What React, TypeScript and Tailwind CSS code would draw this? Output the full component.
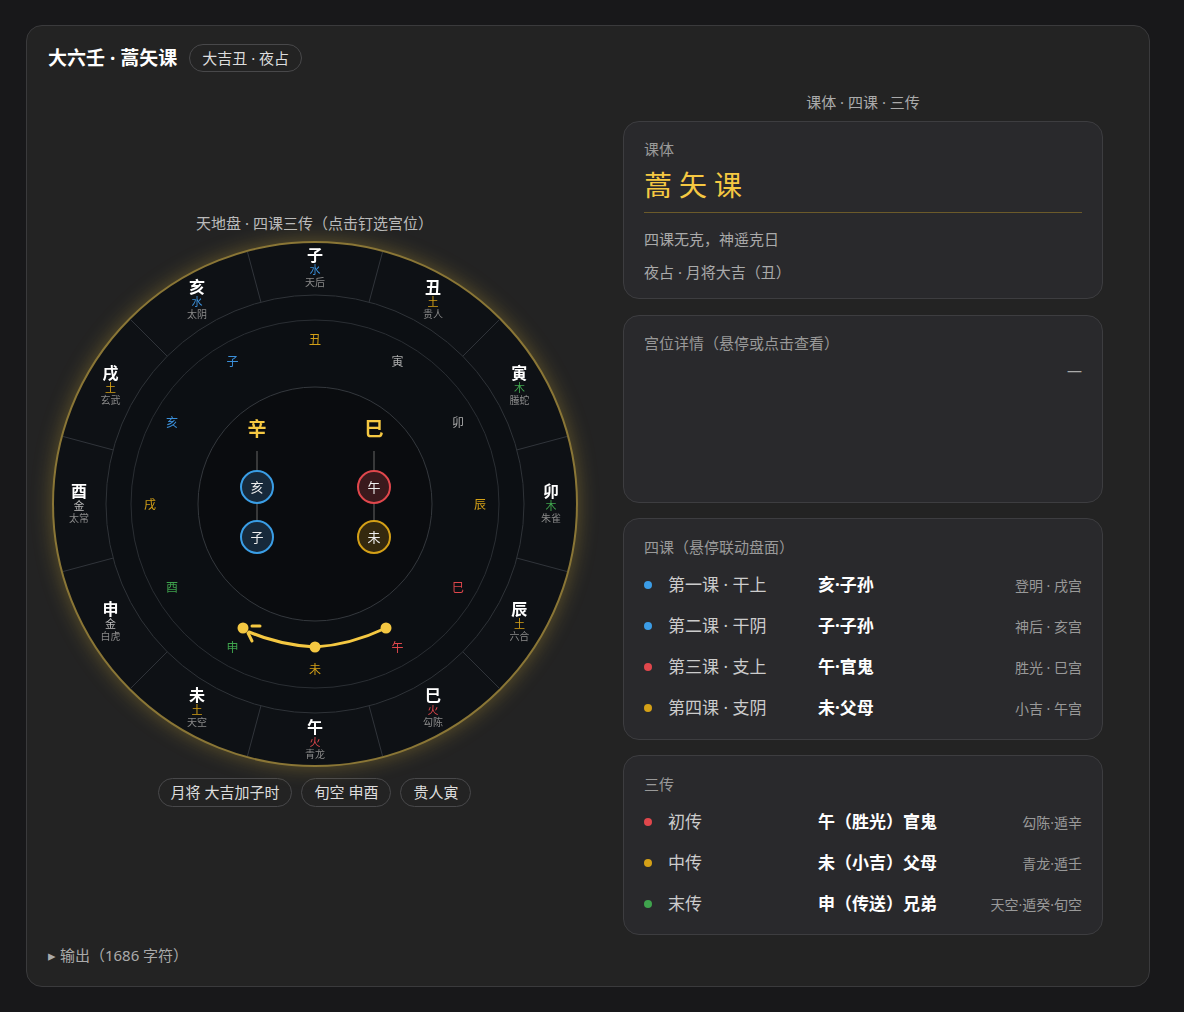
import React from "react";

const F = { fontFamily: '"Noto Sans", "Noto Sans CJK SC", sans-serif' };
const CX = 265, CY = 263;
const pt = (deg: number, r: number) => {
  const a = ((deg - 90) * Math.PI) / 180;
  return [CX + r * Math.cos(a), CY + r * Math.sin(a)];
};
const EC: Record<string, string> = { 水: "#3b8fd9", 土: "#d4a017", 木: "#3fa34d", 金: "#bbbbbb", 火: "#e0474c" };
const outer = [
  ["子", "水", "天后"], ["丑", "土", "贵人"], ["寅", "木", "螣蛇"], ["卯", "木", "朱雀"], ["辰", "土", "六合"], ["巳", "火", "勾陈"],
  ["午", "火", "青龙"], ["未", "土", "天空"], ["申", "金", "白虎"], ["酉", "金", "太常"], ["戌", "土", "玄武"], ["亥", "水", "太阴"],
];
const mid = [
  ["丑", "#d4a017"], ["寅", "#aaaaaa"], ["卯", "#aaaaaa"], ["辰", "#d4a017"], ["巳", "#e0474c"], ["午", "#e0474c"],
  ["未", "#d4a017"], ["申", "#3fa34d"], ["酉", "#3fa34d"], ["戌", "#d4a017"], ["亥", "#3b8fd9"], ["子", "#3b8fd9"],
];

function Wheel() {
  return (
    <svg width="530" height="526" viewBox="0 0 530 526" style={{ filter: "drop-shadow(0 0 10px rgba(212,175,55,0.35))" }}>
      <circle cx={CX} cy={CY} r={262} fill="#0e1115" stroke="#8a7636" strokeWidth="2" />
      <circle cx={CX} cy={CY} r={209} fill="#0c0f13" stroke="#2f3338" />
      <circle cx={CX} cy={CY} r={184} fill="none" stroke="#2a2e33" />
      <circle cx={CX} cy={CY} r={117} fill="#0a0c0f" stroke="#34383d" />
      {Array.from({ length: 12 }).map((_, i) => {
        const [x1, y1] = pt(15 + i * 30, 209);
        const [x2, y2] = pt(15 + i * 30, 261);
        return <line key={i} x1={x1} y1={y1} x2={x2} y2={y2} stroke="#30343a" />;
      })}
      {outer.map(([z, e, g], i) => {
        const [x, y] = pt(i * 30, 236);
        return (
          <g key={z} textAnchor="middle" style={F}>
            <text x={x} y={y - 7} fontSize="16" fontWeight="700" fill="#fff">{z}</text>
            <text x={x} y={y + 6} fontSize="11" fill={EC[e]}>{e}</text>
            <text x={x} y={y + 18} fontSize="10" fill="#8a8a8a">{g}</text>
          </g>
        );
      })}
      {mid.map(([z, c], i) => {
        const [x, y] = pt(i * 30, 165);
        return <text key={i} x={x} y={y + 5} fontSize="12" fill={c} textAnchor="middle" style={F}>{z}</text>;
      })}
      <text x={207} y={195} fontSize="19" fontWeight="700" fill="#f5c842" textAnchor="middle" style={F}>辛</text>
      <text x={324} y={195} fontSize="19" fontWeight="700" fill="#f5c842" textAnchor="middle" style={F}>巳</text>
      <line x1={207} y1={210} x2={207} y2={280} stroke="#666" />
      <line x1={324} y1={210} x2={324} y2={280} stroke="#666" />
      {[
        [207, 246, "亥", "#3a9ee6", "#17293a"], [324, 246, "午", "#e0474c", "#3a1a1d"],
        [207, 296, "子", "#3a9ee6", "#17293a"], [324, 296, "未", "#d4a017", "#34290f"],
      ].map(([x, y, t, s, f]) => (
        <g key={t as string}>
          <circle cx={x as number} cy={y as number} r={16} fill={f as string} stroke={s as string} strokeWidth="2" />
          <text x={x as number} y={(y as number) + 5} fontSize="13" fill="#eee" textAnchor="middle" style={F}>{t}</text>
        </g>
      ))}
      <path d="M336 387 Q300 404 265 406 Q230 404 199 391" fill="none" stroke="#f5c842" strokeWidth="3" strokeLinecap="round" />
      <path d="M202 385 L210 385 M198 392 L202 400" stroke="#f5c842" strokeWidth="3" strokeLinecap="round" />
      <circle cx={193} cy={387} r={5.5} fill="#f5c842" />
      <circle cx={265} cy={406} r={5.5} fill="#f5c842" />
      <circle cx={336} cy={387} r={5.5} fill="#f5c842" />
    </svg>
  );
}

const Card = ({ children, cls = "" }: { children: React.ReactNode; cls?: string }) => (
  <div className={`rounded-2xl border border-[#3d3d40] bg-[#29292c] px-5 ${cls}`}>{children}</div>
);

const dot = (c: string) => <span className="w-2 h-2 rounded-full mr-4" style={{ background: c }} />;

export default function App() {
  const sike = [
    ["#3b9ce6", "第一课 · 干上", "亥·子孙", "登明 · 戌宫"],
    ["#3b9ce6", "第二课 · 干阴", "子·子孙", "神后 · 亥宫"],
    ["#e0474c", "第三课 · 支上", "午·官鬼", "胜光 · 巳宫"],
    ["#d4a017", "第四课 · 支阴", "未·父母", "小吉 · 午宫"],
  ];
  const san = [
    ["#e0474c", "初传", "午（胜光）官鬼", "勾陈·遁辛"],
    ["#d4a017", "中传", "未（小吉）父母", "青龙·遁壬"],
    ["#3fa34d", "末传", "申（传送）兄弟", "天空·遁癸·旬空"],
  ];
  return (
    <div className="min-h-[1012px] bg-[#18181a] pt-[25px] px-[26px]" style={F}>
      <div className="relative w-[1124px] h-[962px] rounded-2xl border border-[#3a3a3c] bg-[#232323]">
        <div className="flex items-center gap-3 pl-[21px] pt-[18px]">
          <span className="text-[19px] font-bold text-white">大六壬 · 蒿矢课</span>
          <span className="rounded-full border border-[#48484a] px-3 h-[28px] flex items-center text-[15px] text-[#ddd]">大吉丑 · 夜占</span>
        </div>
        <div className="flex">
          <div className="w-[575px] flex flex-col items-center pt-[139px]">
            <div className="text-[15px] text-[#bbb] mb-[7px]">天地盘 · 四课三传（点击钉选宫位）</div>
            <div><Wheel /></div>
            <div className="flex gap-[9px] mt-[11px] text-[15px] text-[#ddd]">
              {["月将 大吉加子时", "旬空 申酉", "贵人寅"].map((t) => (
                <span key={t} className="rounded-full border border-[#48484a] px-3 h-[29px] flex items-center">{t}</span>
              ))}
            </div>
          </div>
          <div className="w-[480px] ml-[21px] flex flex-col">
            <div className="text-center text-[15px] text-[#aaa] mt-[18px] mb-[8px]">课体 · 四课 · 三传</div>
            <Card cls="h-[178px] pt-[16px]">
              <div className="text-[15px] text-[#999]">课体</div>
              <div className="text-[28px] text-[#f5c842] tracking-[0.25em] mt-[3px] leading-[40px]" style={{ fontFamily: '"Noto Sans CJK SC", serif' }}>蒿矢课</div>
              <div className="h-px bg-[#6b5a2a] mt-[8px] mb-[10px]" />
              <div className="text-[15px] text-[#aaa] leading-[33px]">四课无克，神遥克日</div>
              <div className="text-[15px] text-[#aaa] leading-[33px]">夜占 · 月将大吉（丑）</div>
            </Card>
            <Card cls="h-[188px] pt-[16px] mt-[16px]">
              <div className="text-[15px] text-[#999]">宫位详情（悬停或点击查看）</div>
              <div className="text-right text-[#aaa] text-[15px] mt-[4px]">—</div>
            </Card>
            <Card cls="h-[222px] pt-[17px] mt-[15px]">
              <div className="text-[15px] text-[#999] mb-[6px]">四课（悬停联动盘面）</div>
              {sike.map(([c, a, b, d]) => (
                <div key={a} className="flex items-center h-[41px]">
                  {dot(c)}
                  <span className="w-[150px] text-[17px] text-[#ccc]">{a}</span>
                  <span className="text-[17px] font-bold text-white flex-1">{b}</span>
                  <span className="text-[14px] text-[#999]">{d}</span>
                </div>
              ))}
            </Card>
            <Card cls="h-[180px] pt-[17px] mt-[15px]">
              <div className="text-[15px] text-[#999] mb-[6px]">三传</div>
              {san.map(([c, a, b, d]) => (
                <div key={a} className="flex items-center h-[41px]">
                  {dot(c)}
                  <span className="w-[150px] text-[17px] text-[#ccc]">{a}</span>
                  <span className="text-[17px] font-bold text-white flex-1">{b}</span>
                  <span className="text-[14px] text-[#999]">{d}</span>
                </div>
              ))}
            </Card>
          </div>
        </div>
        <div className="absolute left-[21px] bottom-[20px] text-[15px] text-[#aaa]">▸ 输出（1686 字符）</div>
      </div>
    </div>
  );
}
